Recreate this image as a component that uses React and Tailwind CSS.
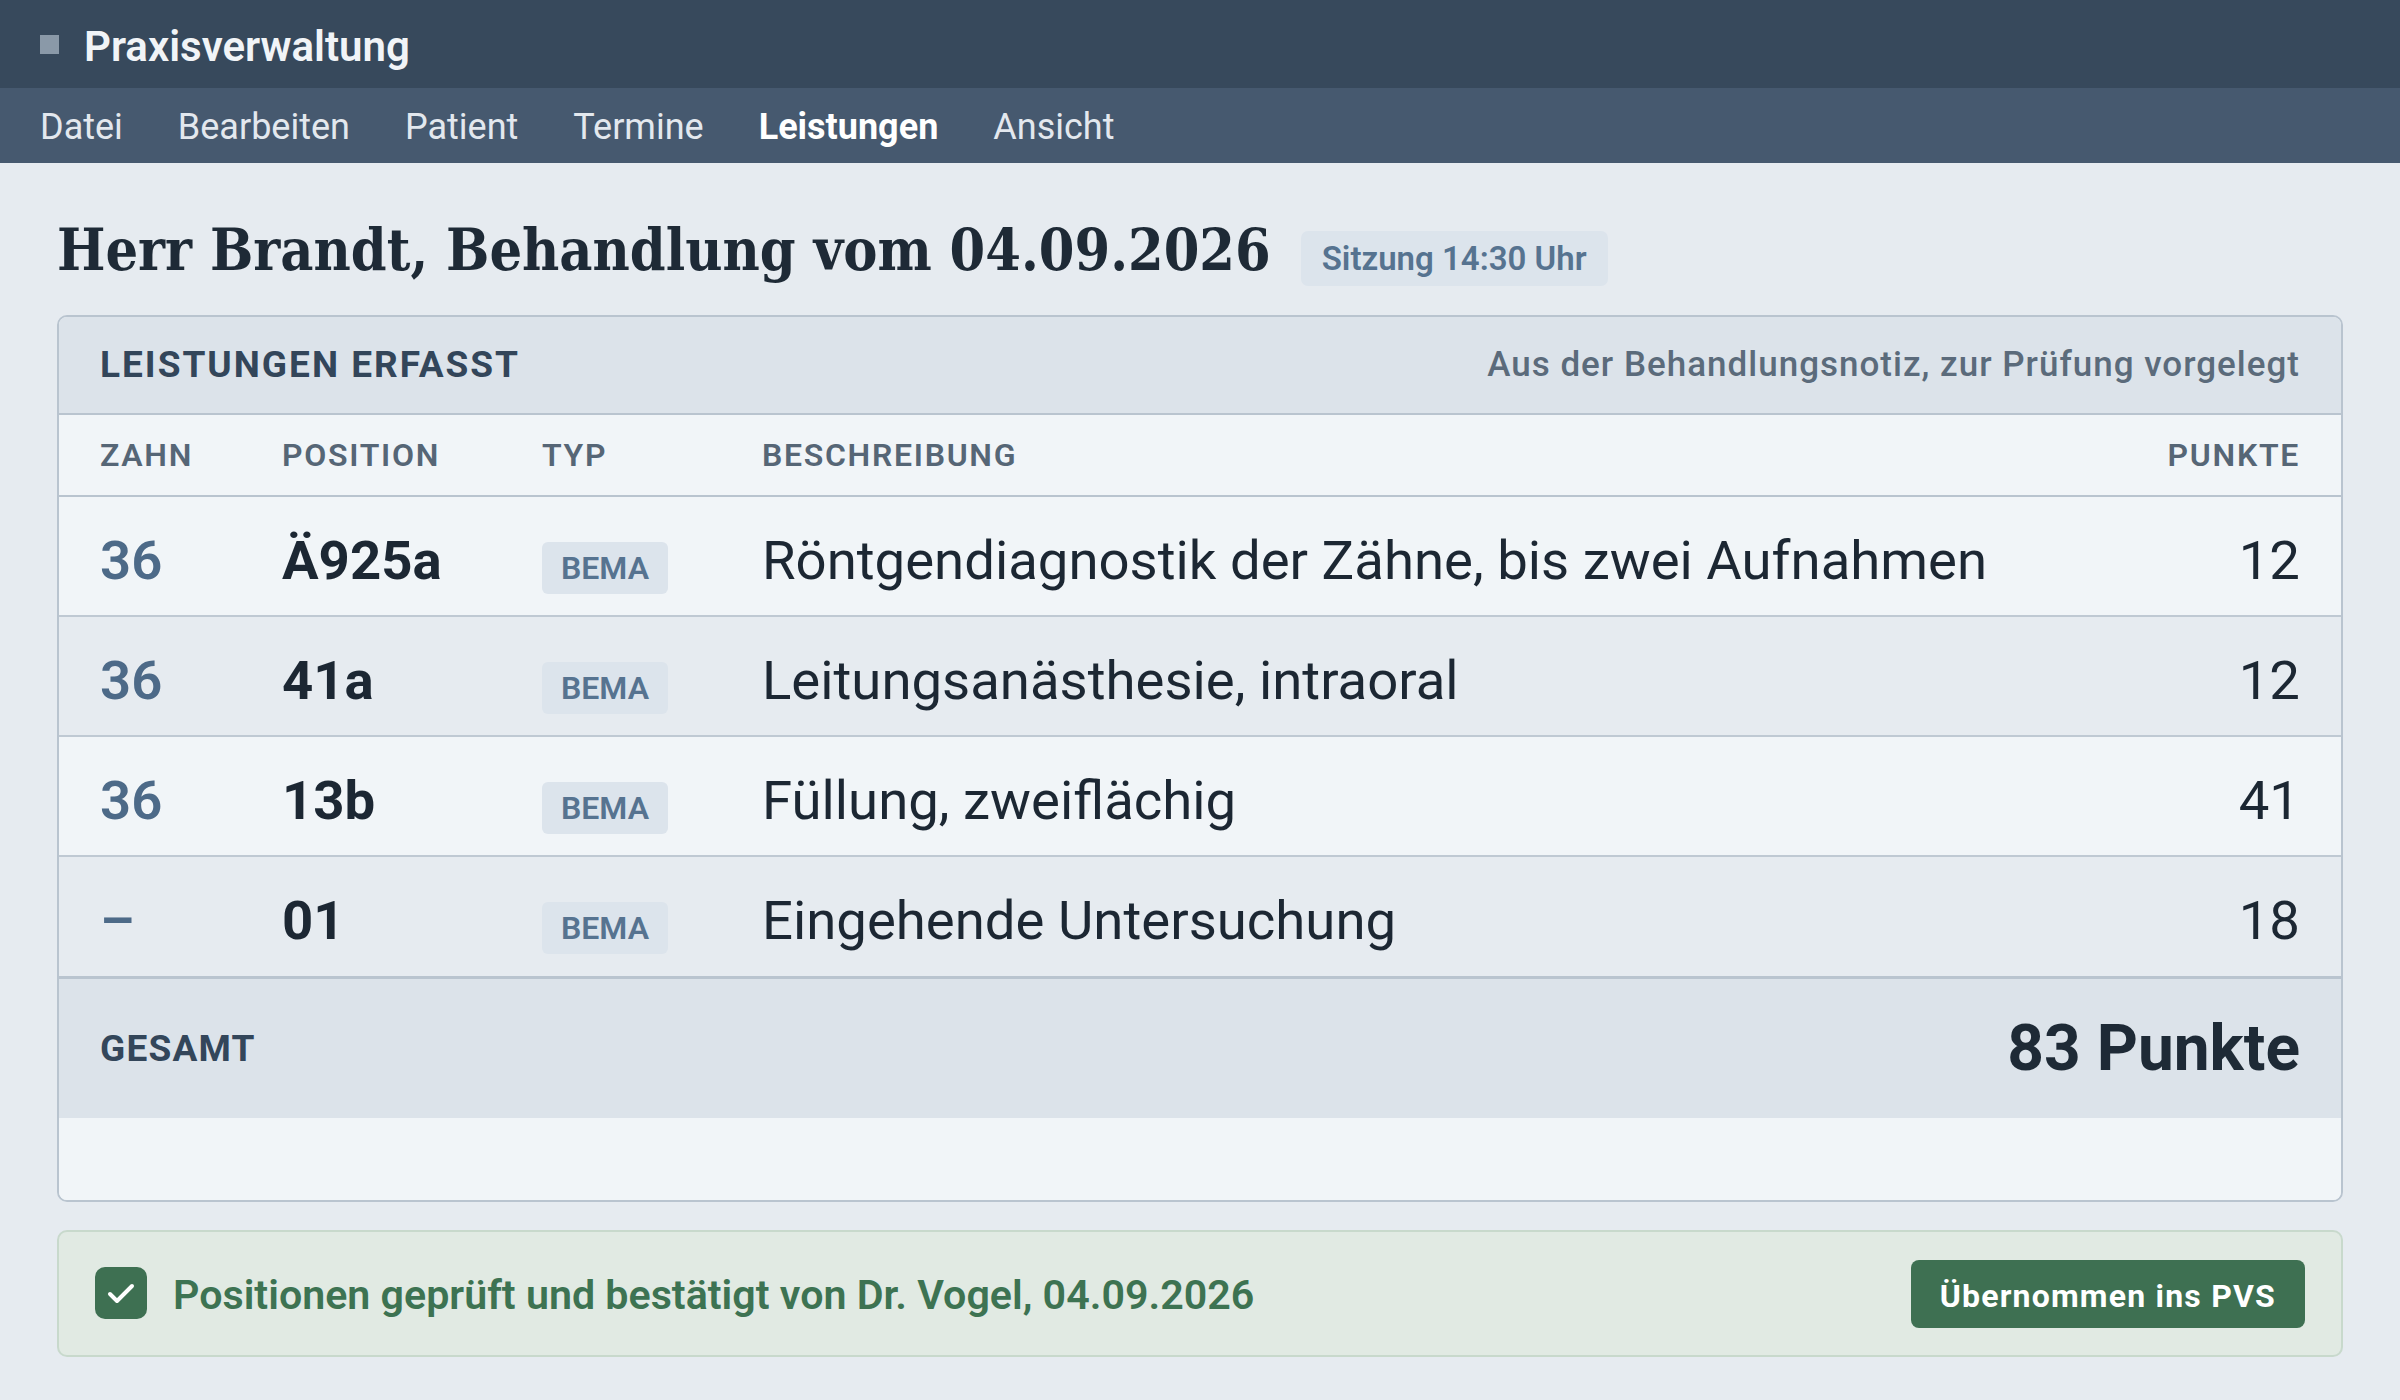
import React from "react";

const rows = [
  { zahn: "36", pos: "Ä925a", desc: "Röntgendiagnostik der Zähne, bis zwei Aufnahmen", pts: "12", bg: "bg-[#f1f5f8]", border: true },
  { zahn: "36", pos: "41a", desc: "Leitungsanästhesie, intraoral", pts: "12", bg: "bg-[#e6ebf0]", border: true },
  { zahn: "36", pos: "13b", desc: "Füllung, zweiflächig", pts: "41", bg: "bg-[#f1f5f8]", border: true },
  { zahn: "–", pos: "01", desc: "Eingehende Untersuchung", pts: "18", bg: "bg-[#e6ebf0]", border: false },
];

export default function App() {
  return (
    <div className="w-[2400px] h-[1400px] bg-[#e6ebf0] font-['Roboto',sans-serif] overflow-hidden">
      {/* Title bar */}
      <div className="h-[88px] bg-[#37495c] flex items-center pl-[40px]">
        <div className="w-[19px] h-[19px] bg-[#8a99a8]" />
        <div className="ml-[25px] mt-[5px] text-[42px] font-semibold text-[#f1f4f7] leading-none">Praxisverwaltung</div>
      </div>
      {/* Menu bar */}
      <div className="h-[75px] bg-[#46596f] flex items-center pl-[40px] pt-[3px] gap-[55px] text-[36px] text-[#e3e8ee]">
        <span>Datei</span>
        <span>Bearbeiten</span>
        <span>Patient</span>
        <span>Termine</span>
        <span className="font-bold text-white">Leistungen</span>
        <span>Ansicht</span>
      </div>

      <div className="px-[57px]">
        {/* Heading */}
        <div className="pt-[47px] flex items-baseline gap-[30px]">
          <h1 className="font-['DejaVu_Serif_Condensed','DejaVu_Serif',serif] font-bold text-[57px] leading-[80px] text-[#1e2a36]">
            Herr Brandt, Behandlung vom 04.09.2026
          </h1>
          <span className="inline-flex items-center h-[55px] px-[21px] rounded-[7px] bg-[#dce4ec] text-[33px] font-semibold text-[#567390]">
            Sitzung 14:30 Uhr
          </span>
        </div>

        {/* Card */}
        <div className="mt-[25px] border-2 border-[#b9c4cf] rounded-[10px] bg-[#f1f5f8] overflow-hidden">
          <div className="h-[98px] border-b-2 border-[#b9c4cf] bg-[#dce3ea] px-[41px] flex items-center justify-between">
            <span className="text-[37px] font-bold tracking-[2px] text-[#33465a]">LEISTUNGEN ERFASST</span>
            <span className="text-[35px] font-medium tracking-[1px] text-[#5b6b7b]">Aus der Behandlungsnotiz, zur Prüfung vorgelegt</span>
          </div>
          <div className="h-[82px] border-b-2 border-[#b9c4cf] px-[41px] grid grid-cols-[182px_260px_220px_1fr_auto] items-center text-[32px] font-semibold tracking-[1.7px] text-[#566676]">
            <span>ZAHN</span>
            <span>POSITION</span>
            <span>TYP</span>
            <span>BESCHREIBUNG</span>
            <span className="text-right">PUNKTE</span>
          </div>
          {rows.map((r, i) => (
            <div
              key={i}
              className={`${r.bg} ${r.border ? "h-[120px] border-b-2 border-[#bfc9d3]" : "h-[119px]"} px-[41px] pt-[31px] grid grid-cols-[182px_260px_220px_1fr_auto] items-baseline text-[54.5px] leading-[64px] text-[#1c2733]`}
            >
              <span className="font-semibold text-[#4d6a88]">{r.zahn}</span>
              <span className="font-bold">{r.pos}</span>
              <span>
                <span className="inline-flex items-center h-[52px] px-[19px] rounded-[6px] bg-[#dce4ec] text-[32px] leading-none font-semibold text-[#567390]">
                  BEMA
                </span>
              </span>
              <span>{r.desc}</span>
              <span className="text-right">{r.pts}</span>
            </div>
          ))}
          <div className="h-[142px] border-t-[3px] border-[#b9c4cf] bg-[#dce3ea] px-[41px] flex items-center justify-between">
            <span className="text-[37px] font-bold tracking-[1.2px] text-[#33465a]">GESAMT</span>
            <span className="text-[64px] font-bold text-[#1e2a36]">83 Punkte</span>
          </div>
          <div className="h-[82px] bg-[#f1f5f8]" />
        </div>

        {/* Confirmation */}
        <div className="mt-[28px] h-[127px] border-2 border-[#c8d9cc] bg-[#e1eae3] rounded-[10px] flex items-center justify-between pl-[36px] pr-[36px]">
          <div className="flex items-center">
            <div className="w-[52px] h-[52px] rounded-[10px] bg-[#3e7052] flex items-center justify-center">
              <svg width="52" height="52" viewBox="0 0 52 52" fill="none">
                <path d="M15 27 L22 34 L37 19" stroke="white" strokeWidth="4" strokeLinecap="round" strokeLinejoin="round" />
              </svg>
            </div>
            <span className="ml-[26px] pt-[4px] text-[41.2px] font-semibold text-[#3d7352]">
              Positionen geprüft und bestätigt von Dr. Vogel, 04.09.2026
            </span>
          </div>
          <button className="h-[68px] px-[29px] pt-[4px] rounded-[8px] bg-[#3e7052] text-white text-[32px] tracking-[1.2px] font-bold">
            Übernommen ins PVS
          </button>
        </div>
      </div>
    </div>
  );
}
